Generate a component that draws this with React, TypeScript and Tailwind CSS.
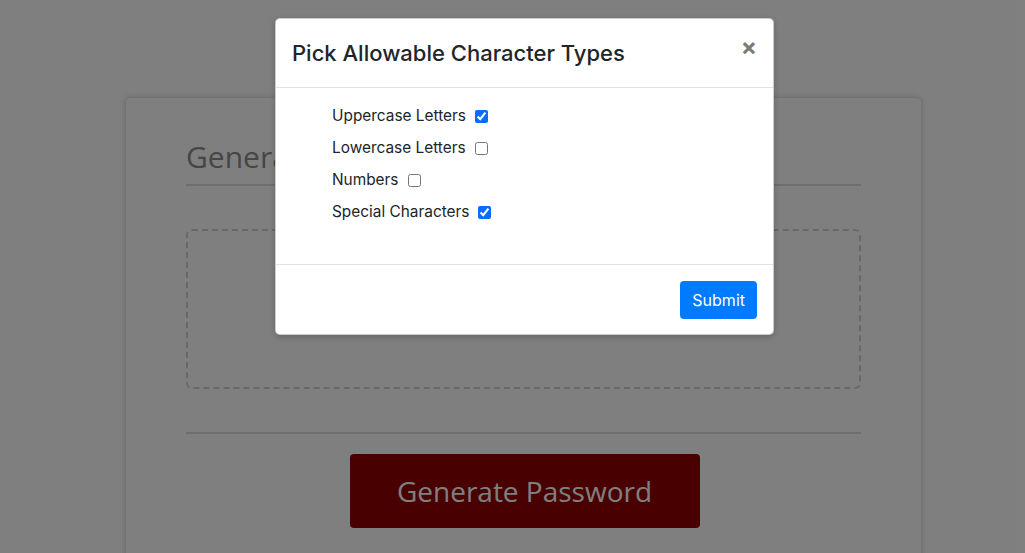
import React from "react";

const options = [
  { label: "Uppercase Letters", checked: true },
  { label: "Lowercase Letters", checked: false },
  { label: "Numbers", checked: false },
  { label: "Special Characters", checked: true },
];

export default function App() {
  return (
    <div className="relative h-[553px] overflow-hidden bg-white font-['Inter',sans-serif]">
      {/* page behind the modal */}
      <div className="ml-[125px] mt-[97px] w-[797px] h-[520px] rounded-[5px] border border-[#e6e6e6] bg-white px-[60px] pt-[38px] shadow-[0_0_6px_rgba(0,0,0,0.15)]">
        <h2 className="border-b-2 border-[#dcdcdc] pb-[6px] font-['Open_Sans',sans-serif] text-[30px] leading-[42px] text-[#8c8c8c]">
          Generate
        </h2>
        <div className="mt-[43px] h-[160px] rounded-[6px] border-2 border-dashed border-[#d0d0d0]" />
        <div className="mt-[43px] border-t-2 border-[#dcdcdc]" />
        <div className="flex justify-center pt-[20px] pl-[2px]">
          <button className="h-[74px] w-[350px] rounded-[4px] bg-[#930000] font-['Open_Sans',sans-serif] text-[28px] text-white">
            Generate Password
          </button>
        </div>
      </div>

      {/* backdrop */}
      <div className="absolute inset-0 bg-black/50" />

      {/* modal */}
      <div className="absolute left-[275px] top-[18px] w-[499px] rounded-[5px] border border-black/20 bg-white shadow-[0_2px_6px_rgba(0,0,0,0.2)]">
        <div className="flex h-[69px] items-start justify-between border-b border-[#dee2e6] px-4 pt-[19px]">
          <h5 className="text-[22px] font-medium leading-[30px] text-[#212529]">Pick Allowable Character Types</h5>
          <button className="mt-[-3px] text-[24px] font-bold leading-none text-[#7a7a7a]">×</button>
        </div>
        <div className="px-4 pt-4 pb-8">
          <ul className="pl-10">
            {options.map((o) => (
              <li key={o.label} className="mb-2 flex h-6 items-center text-[15.4px] leading-6 text-[#212529]">
                <label className="flex items-center">
                  {o.label}
                  <input type="checkbox" defaultChecked={o.checked} className="ml-[9px] h-[13px] w-[13px] accent-[#0a6cff]" />
                </label>
              </li>
            ))}
          </ul>
        </div>
        <div className="flex justify-end border-t border-[#dee2e6] px-4 pt-4 pb-[15px]">
          <button className="h-[38px] rounded-[4px] bg-[#007bff] px-3 text-[16px] text-white">Submit</button>
        </div>
      </div>
    </div>
  );
}
